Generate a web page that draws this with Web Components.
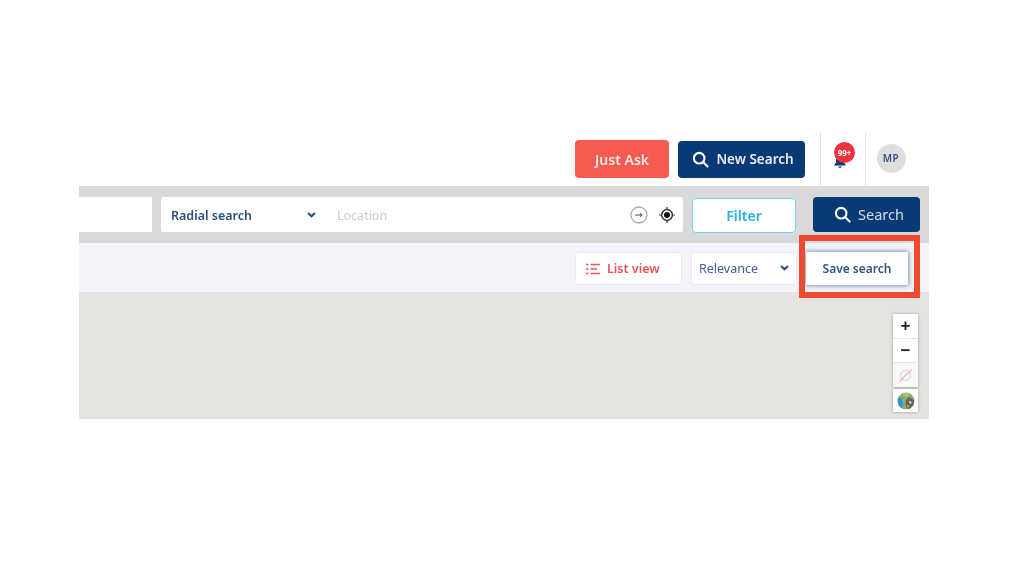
<!DOCTYPE html>
<html>
<head>
<meta charset="utf-8">
<title>Save search</title>
<style>
  html, body { margin: 0; padding: 0; background: #fff; }
  body { font-family: "Noto Sans", "Open Sans", sans-serif; }
</style>
</head>
<body>
<search-app></search-app>

<script>
const searchIcon = `<svg width="17" height="17" viewBox="0 0 18 18" fill="none" stroke="#fff" stroke-width="2.2" stroke-linecap="round"><circle cx="7.600" cy="7.600" r="5.600"/><path d="M11.700 11.700 16.500 16.500"/></svg>`;
const chevron = `<svg width="9" height="6" viewBox="0 0 10 7" fill="none" stroke="#27507f" stroke-width="2.6"><path d="M1 1.200 5 5 9 1.200"/></svg>`;

class AppButton extends HTMLElement {
  constructor() {
    super();
    this.attachShadow({mode: 'open'});
    this.shadowRoot.innerHTML = `
      <style>
        :host {
          display: inline-flex;
          align-items: center;
          justify-content: center;
          gap: 7px;
          box-sizing: border-box;
          border-radius: 4px;
          font-size: 14px;
          font-weight: 600;
          background: #0a3a75;
          color: #e8edf4;
          flex: none;
        }
        :host([kind="ask"]) { background: #f65b52; color: #fde4e1; }
        :host([kind="filter"]) { background: #fff; color: #1fb2ea; border: 1.5px solid #74d3f2; }
        :host([kind="search"]) { font-weight: 400; font-size: 14.5px; color: #d5deea; }
        :host([kind="list"]) {
          background: #fff;
          color: #f4505a;
          border: 1px solid #e9ebf0;
          font-size: 12.5px;
          gap: 6px;
          justify-content: flex-start;
          padding-left: 10px;
        }
        :host([kind="save"]) {
          background: #fff;
          color: #33527a;
          font-size: 12px;
          border-radius: 1px;
          box-shadow: 0 0 4px 1px rgba(60,85,130,0.6);
        }
      </style>
      <slot></slot>
    `;
  }
}
customElements.define('app-button', AppButton);

class TopBar extends HTMLElement {
  constructor() {
    super();
    this.attachShadow({mode: 'open'});
    this.shadowRoot.innerHTML = `
      <style>
        :host {
          display: flex;
          justify-content: flex-end;
          height: 53px;
          background: #fff;
          border-top-right-radius: 6px;
        }
        .actions { display: flex; align-items: center; gap: 9px; padding: 0 15px 1px 0; }
        app-button { height: 38px; }
        .ask { width: 94px; }
        .new { width: 127px; height: 37px; font-size: 13.5px; padding-left: 3px; }
        .cell {
          display: flex;
          align-items: center;
          justify-content: center;
          box-sizing: border-box;
          border-left: 1px solid #dfdfdf;
        }
        .bell { width: 45px; position: relative; }
        .badge {
          position: absolute;
          left: 13px;
          top: 9px;
          width: 21px;
          height: 21px;
          border-radius: 50%;
          background: #f0323f;
          color: #fff;
          font-size: 8px;
          font-weight: 700;
          line-height: 21px;
          text-align: center;
        }
        .bell svg { position: absolute; left: 12px; top: 21px; }
        .user { width: 64px; padding: 0 13px 3px 0; }
        .avatar {
          width: 29px;
          height: 29px;
          border-radius: 50%;
          background: #dedede;
          color: #2b5183;
          font-size: 10px;
          font-weight: 600;
          letter-spacing: 0.5px;
          display: flex;
          align-items: center;
          justify-content: center;
        }
      </style>
      <div class="actions">
        <app-button class="ask" kind="ask">Just Ask</app-button>
        <app-button class="new">${searchIcon}New Search</app-button>
      </div>
      <div class="cell bell">
        <svg width="14" height="15" viewBox="0 0 14 15" fill="#0a3a75"><path d="M7 0C4 0 3 2.500 3 5v3.500L1 11.500h12L11 8.500V5C11 2.500 10 0 7 0Z"/><path d="M5 12.500h4L7 14.500Z"/></svg>
        <span class="badge">99+</span>
      </div>
      <div class="cell user"><span class="avatar">MP</span></div>
    `;
  }
}
customElements.define('top-bar', TopBar);

class SearchRow extends HTMLElement {
  constructor() {
    super();
    this.attachShadow({mode: 'open'});
    this.shadowRoot.innerHTML = `
      <style>
        :host {
          display: flex;
          align-items: flex-start;
          height: 57px;
          box-sizing: border-box;
          padding: 11px 9px 0 0;
          background: #d9d9d9;
          gap: 9px;
        }
        .field { background: #fff; height: 35px; box-sizing: border-box; }
        .keyword { width: 73px; flex: none; }
        .radial {
          width: 522px;
          flex: none;
          display: flex;
          align-items: center;
          padding: 0 8px 0 10px;
          border-radius: 2px;
        }
        .kind { font-size: 12.5px; font-weight: 600; color: #27507f; width: 136px; padding-top: 1px; }
        .radial svg.chev { flex: none; margin-right: 21px; }
        .loc { font-size: 12.5px; color: #c9ccd1; flex: 1; padding-top: 1px; }
        .go { margin-right: 11px; }
        app-button[kind="filter"] { width: 104px; height: 35px; margin-top: 1px; }
        app-button[kind="search"] { width: 107px; height: 35px; margin-left: 8px; padding: 0 0 2px 5px; }
        app-button[kind="search"] svg { margin-top: 2px; }
      </style>
      <div class="field keyword"></div>
      <div class="field radial">
        <span class="kind">Radial search</span>
        <svg class="chev" width="9" height="6" viewBox="0 0 10 7" fill="none" stroke="#27507f" stroke-width="2.600"><path d="M1 1.200 5 5 9 1.200"/></svg>
        <span class="loc">Location</span>
        <svg class="go" width="18" height="18" viewBox="0 0 18 18" fill="none"><circle cx="9" cy="9" r="8" stroke="#a9a9a9" stroke-width="1.300"/><path d="M5 9h7" stroke="#777" stroke-width="1.300"/><path d="M10 6.500 13 9l-3 2.500Z" fill="#777"/></svg>
        <svg width="16" height="16" viewBox="0 0 16 16" fill="none"><circle cx="8" cy="8" r="5.400" stroke="#333" stroke-width="1.500"/><circle cx="8" cy="8" r="3" fill="#111"/><path d="M8 0v2.500M8 13.500V16M0 8h2.500M13.500 8H16" stroke="#444" stroke-width="1.200"/></svg>
      </div>
      <app-button kind="filter">Filter</app-button>
      <app-button kind="search">${searchIcon}Search</app-button>
    `;
  }
}
customElements.define('search-row', SearchRow);

class ResultsToolbar extends HTMLElement {
  constructor() {
    super();
    this.attachShadow({mode: 'open'});
    this.shadowRoot.innerHTML = `
      <style>
        :host {
          display: flex;
          justify-content: flex-end;
          align-items: flex-start;
          gap: 9px;
          height: 49px;
          box-sizing: border-box;
          padding: 9px 21px 0 0;
          background: #f3f4f9;
        }
        app-button[kind="list"] { width: 107px; height: 33px; }
        .sort {
          width: 106px;
          height: 33px;
          box-sizing: border-box;
          background: #fff;
          border: 1px solid #e9ebf0;
          border-radius: 3px;
          display: flex;
          align-items: center;
          justify-content: space-between;
          padding: 0 7px;
          font-size: 12.5px;
          color: #3f5f8a;
        }
        .sort svg { margin-top: -2px; }
        app-button[kind="save"] { width: 102px; height: 33px; }
      </style>
      <app-button kind="list">
        <svg width="15" height="12" viewBox="0 0 15 12" fill="none" stroke="#f4505a" stroke-width="1.700"><path d="M0 1.500h2.500M4.500 1.500H14M0 6h2.500M4.500 6H11M0 10.500h2.500M4.500 10.500H14"/></svg>List view
      </app-button>
      <div class="sort">Relevance${chevron}</div>
      <app-button kind="save">Save search</app-button>
    `;
  }
}
customElements.define('results-toolbar', ResultsToolbar);

class MapPanel extends HTMLElement {
  constructor() {
    super();
    this.attachShadow({mode: 'open'});
    this.shadowRoot.innerHTML = `
      <style>
        :host {
          display: flex;
          flex-direction: column;
          align-items: flex-end;
          height: 127px;
          box-sizing: border-box;
          padding: 22px 11px 0 0;
          background: #e5e3df;
        }
        .stack, .layer {
          width: 25px;
          background: #fff;
          box-shadow: 0 0 3px rgba(0,0,0,0.3);
        }
        .ctl {
          height: 24px;
          display: flex;
          align-items: center;
          justify-content: center;
          font-size: 17px;
          font-weight: 700;
          color: #222;
          font-family: "Liberation Sans", sans-serif;
          border-bottom: 1px solid #e6e6e6;
          box-sizing: border-box;
        }
        .ctl:first-child { height: 25px; }
        .ctl:last-child { border-bottom: 0; background: #f8f8f8; }
        .layer { margin-top: 2px; height: 23px; display: flex; align-items: center; justify-content: center; }
      </style>
      <div class="stack">
        <div class="ctl">+</div>
        <div class="ctl">−</div>
        <div class="ctl">
          <svg width="15" height="15" viewBox="0 0 15 15" fill="none"><circle cx="7.500" cy="7.500" r="5" stroke="#ddd" stroke-width="1.500"/><path d="M1.500 13.500 13.500 1.500" stroke="#f6b6bb" stroke-width="1.500"/></svg>
        </div>
      </div>
      <div class="layer">
        <svg width="18" height="18" viewBox="0 0 18 18">
          <circle cx="9" cy="9" r="8.500" fill="#86ad6a"/>
          <path d="M1 6C3 5 5 7 5.500 10S5.500 16 4.500 16C1.500 14 .5 10 1 6Z" fill="#2f8fd6"/>
          <path d="M9 8l3-3 5 3-.5 5-4 4-3-1-1-4Z" fill="#6b6555"/>
          <path d="M12 9l3 1-1 2-2-1ZM10 13l2 1-1 2Z" fill="#d8cfa8"/>
          <path d="M5 1.500 11 .8l2 2.500-5 2Z" fill="#a9c47c"/>
        </svg>
      </div>
    `;
  }
}
customElements.define('map-panel', MapPanel);

class SearchApp extends HTMLElement {
  constructor() {
    super();
    this.attachShadow({mode: 'open'});
    this.shadowRoot.innerHTML = `
      <style>
        :host {
          display: block;
          position: relative;
          box-sizing: border-box;
          width: 1024px;
          height: 576px;
          padding: 133px 95px 0 79px;
          background: #fff;
          filter: blur(0.4px);
        }
        .callout {
          position: absolute;
          left: 799px;
          top: 235px;
          width: 121px;
          height: 63px;
          box-sizing: border-box;
          border: 6px solid #ee4a32;
        }
      </style>
      <top-bar></top-bar>
      <search-row></search-row>
      <results-toolbar></results-toolbar>
      <map-panel></map-panel>
      <div class="callout"></div>
    `;
  }
}
customElements.define('search-app', SearchApp);
</script>
</body>
</html>
